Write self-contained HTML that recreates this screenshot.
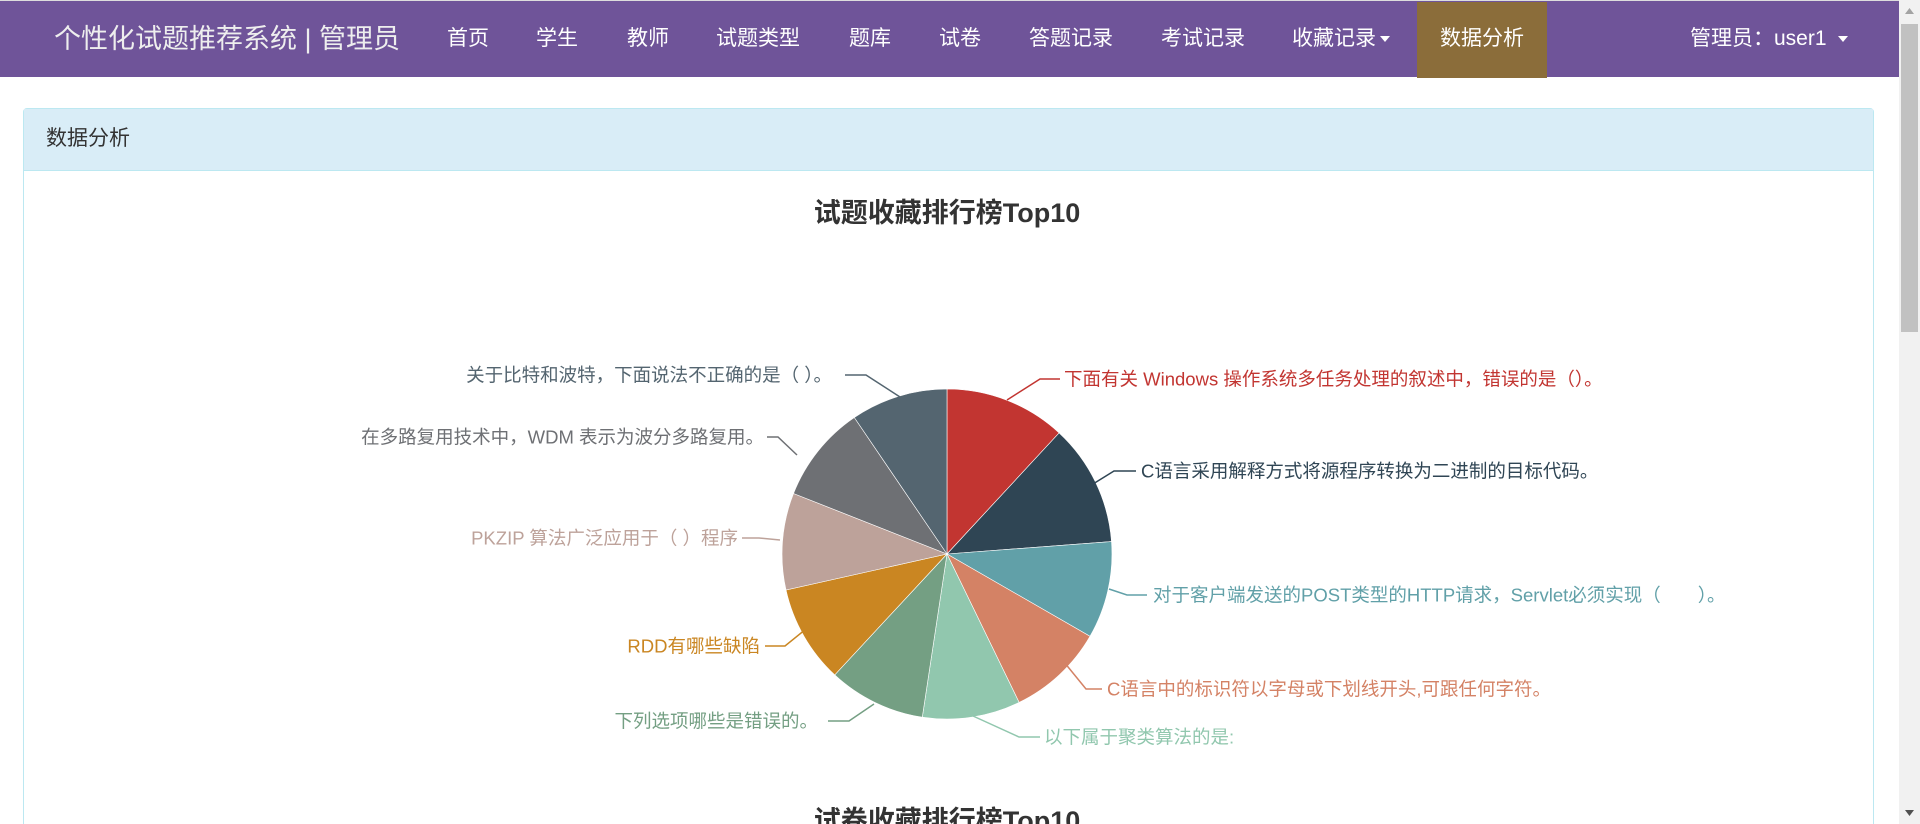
<!DOCTYPE html>
<html><head><meta charset="utf-8">
<style>
*{margin:0;padding:0;box-sizing:border-box}
html,body{width:1920px;height:824px;overflow:hidden}
body{background:#fff;font-family:"Liberation Sans","Noto Sans CJK SC",sans-serif;position:relative}
.nav{position:absolute;left:0;top:0;width:1899px;height:77px;background:#6f5499;border-top:1px solid #ddd}
.nav span{position:absolute;top:0;line-height:76px;color:#fff;font-size:21px;white-space:nowrap}
.brand{font-size:27px!important;color:#eee!important}
.active{position:absolute;left:1417px;top:1px;width:130px;height:76px;background:#8b6d3a}
.caret{display:inline-block;width:0;height:0;border-left:5px solid transparent;border-right:5px solid transparent;border-top:6px solid #fff;vertical-align:middle;margin-left:4px}
.sb{position:absolute;left:1899px;top:0;width:21px;height:824px;background:#f1f1f1}
.thumb{position:absolute;left:1901px;top:24px;width:17px;height:308px;background:#c1c1c1}
.panel{position:absolute;left:23px;top:108px;width:1851px;height:730px;border:1px solid #bce8f1;border-radius:4px}
.ph{height:62px;background:#d9edf7;border-bottom:1px solid #bce8f1;font-size:21px;line-height:60px;padding-left:22px;color:#333}
svg text{font-family:"Liberation Sans","Noto Sans CJK SC",sans-serif}
</style></head><body>
<div class="nav">
<div class="active"></div>
<span class="brand" style="left:54px">个性化试题推荐系统 | 管理员</span>
<span style="left:447px">首页</span>
<span style="left:536px">学生</span>
<span style="left:627px">教师</span>
<span style="left:716px">试题类型</span>
<span style="left:849px">题库</span>
<span style="left:939px">试卷</span>
<span style="left:1029px">答题记录</span>
<span style="left:1161px">考试记录</span>
<span style="left:1292px">收藏记录<i class="caret"></i></span>
<span style="left:1440px">数据分析</span>
<span style="left:1690px">管理员：user1 <i class="caret" style="margin-left:6px"></i></span>
</div>
<div class="sb"></div><div class="thumb"></div>
<svg style="position:absolute;left:1899px;top:0" width="21" height="824"><path d="M6 14 L10.5 8 L15 14Z" fill="#a3a3a3"/><path d="M6 810 L10.5 816 L15 810Z" fill="#505050"/></svg>
<div class="panel"><div class="ph">数据分析</div></div>
<svg style="position:absolute;left:0;top:0" width="1899" height="824">
<text x="947" y="222" text-anchor="middle" font-size="27" font-weight="bold" fill="#333">试题收藏排行榜Top10</text>
<text x="947" y="830" text-anchor="middle" font-size="27" font-weight="bold" fill="#333">试卷收藏排行榜Top10</text>
<g stroke="#fff" stroke-width="0.6">
<path d="M947 554 L947 389 A165 165 0 0 1 1059.1 432.9Z" fill="#c23531"/>
<path d="M947 554 L1059.1 432.9 A165 165 0 0 1 1111.5 541.6Z" fill="#2f4554"/>
<path d="M947 554 L1111.5 541.6 A165 165 0 0 1 1090 636.3Z" fill="#61a0a8"/>
<path d="M947 554 L1090 636.3 A165 165 0 0 1 1019.1 702.4Z" fill="#d48265"/>
<path d="M947 554 L1019.1 702.4 A165 165 0 0 1 922.3 717.2Z" fill="#91c7ae"/>
<path d="M947 554 L922.3 717.2 A165 165 0 0 1 834.7 674.9Z" fill="#749f83"/>
<path d="M947 554 L834.7 674.9 A165 165 0 0 1 786 590Z" fill="#ca8622"/>
<path d="M947 554 L786 590 A165 165 0 0 1 793.5 493.5Z" fill="#bda29a"/>
<path d="M947 554 L793.5 493.5 A165 165 0 0 1 854.3 417.5Z" fill="#6e7074"/>
<path d="M947 554 L854.3 417.5 A165 165 0 0 1 947 389Z" fill="#546570"/>
</g>
<g fill="none" stroke-width="1.5">
<polyline points="1007,400 1040,379 1060,379" stroke="#c23531"/>
<polyline points="1093,484 1114,471 1136,471" stroke="#2f4554"/>
<polyline points="1109,589 1127,595 1147,595" stroke="#61a0a8"/>
<polyline points="1064,662 1086,689 1102,689" stroke="#d48265"/>
<polyline points="973,716 1019,737 1040,737" stroke="#91c7ae"/>
<polyline points="874,704 849,721 828,721" stroke="#749f83"/>
<polyline points="806,629 785,646 765,646" stroke="#ca8622"/>
<polyline points="780,540 759,538 742,538" stroke="#bda29a"/>
<polyline points="797,455 778,437 767,437" stroke="#6e7074"/>
<polyline points="900,397 866,375 845,375" stroke="#546570"/>
</g>
<g font-size="18.5" dominant-baseline="central">
<text x="1064" y="379" fill="#c23531">下面有关 Windows 操作系统多任务处理的叙述中，错误的是（）。</text>
<text x="1141" y="471" fill="#2f4554">C语言采用解释方式将源程序转换为二进制的目标代码。</text>
<text x="1153" y="595" fill="#61a0a8">对于客户端发送的POST类型的HTTP请求，Servlet必须实现（　　）。</text>
<text x="1107" y="689" fill="#d48265">C语言中的标识符以字母或下划线开头,可跟任何字符。</text>
<text x="1044" y="737" fill="#91c7ae">以下属于聚类算法的是:</text>
<text x="818" y="721" fill="#749f83" text-anchor="end">下列选项哪些是错误的。</text>
<text x="760" y="646" fill="#ca8622" text-anchor="end">RDD有哪些缺陷</text>
<text x="738" y="538" fill="#bda29a" text-anchor="end">PKZIP 算法广泛应用于（ ）程序</text>
<text x="764" y="437" fill="#6e7074" text-anchor="end">在多路复用技术中，WDM 表示为波分多路复用。</text>
<text x="832" y="375" fill="#546570" text-anchor="end">关于比特和波特，下面说法不正确的是（ ）。</text>
</g>
</svg>
</body></html>
